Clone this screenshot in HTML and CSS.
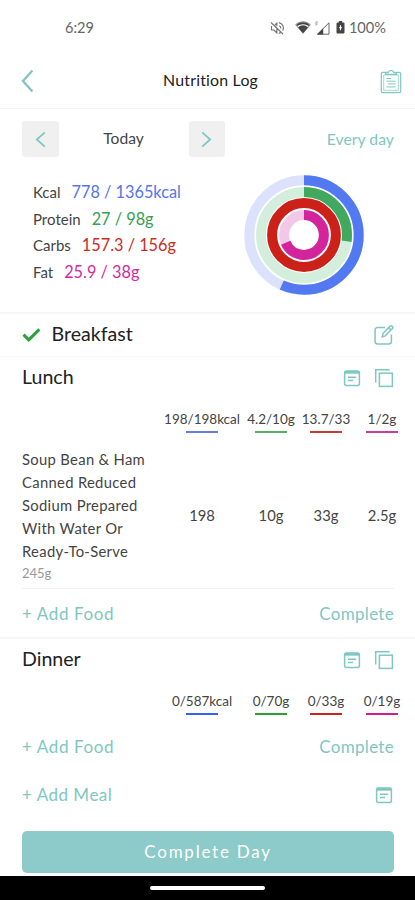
FILE: index.html
```html
<!DOCTYPE html>
<html lang="en">
<head>
<meta charset="utf-8">
<title>Nutrition Log</title>
<link rel="stylesheet" href="styles.css">
</head>
<body>
<svg class="defs" aria-hidden="true">
  <symbol id="note" viewBox="0 0 18 18"><rect x="1.6" y="1.9" width="14.8" height="14.6" rx="2"/><path d="M1.6 3.3h14.8" stroke-width="2.8"/><path d="M5 8.2h8.2M5 11.5h5"/></symbol>
  <symbol id="copy" viewBox="0 0 20 20"><path d="M1.7 14.5V1.7h14"/><rect x="5.4" y="5.2" width="13" height="13.2"/></symbol>
  <symbol id="edit" viewBox="0 0 20 20"><path d="M11 2.6H3.6a2.5 2.5 0 0 0-2.5 2.5v11.3a2.5 2.5 0 0 0 2.5 2.5h11.3a2.5 2.5 0 0 0 2.5-2.5V9.5"/><path d="M8.2 11.9l.7-3.4 7-7.1a1.5 1.5 0 0 1 2.4 2.4l-7.1 7.1zM14.8 2.8l2.3 2.3"/></symbol>
</svg>
<div class="screen">
  <div class="status">
    <span class="time">6:29</span>
    <div class="status-icons">
      <svg class="mute" viewBox="0 0 15 14"><path d="M1 1.5l12 11.5M1.5 5v4h2.3l3 2.8V8M5 4l1.8-1.8v3M9 1.6a5.5 5.5 0 0 1 3.8 8M9.2 4.7a2.5 2.5 0 0 1 1.5 2.8M8.8 12.4l1.8-.8"/></svg>
      <svg class="wifi" viewBox="0 0 16 13"><path d="M.7 3.7a10.5 10.5 0 0 1 14.6 0L8 12.3z" fill="none" stroke="#777" stroke-width=".9"/><path d="M3 6.2a7.4 7.4 0 0 1 10 0l-5 6z"/><path d="M1.4 3.8a10 10 0 0 1 13.2 0l-1 1.3a9 9 0 0 0-11.2 0z"/></svg>
      <svg class="signal" viewBox="0 0 15 14"><path d="M2.5 13.2L14 1.8v11.4z" fill="none" stroke="#666"/><path d="M2 13.5l6.2-6.2v6.2z"/><path d="M.6 1h2.6M.6 3h2.2M1 1v3.8" fill="none" stroke="#999" stroke-width=".8"/></svg>
      <svg class="battery" viewBox="0 0 9 13"><path d="M2.8 0h3.4v1.4h1.3q1 0 1 1v9q0 1-1 1h-6q-1 0-1-1v-9q0-1 1-1h1.3z"/><path d="M4.5 4.2v5M3 6.7h3" stroke="#fff" stroke-width="1.1"/></svg>
      <span class="charge">100%</span>
    </div>
  </div>

  <header class="header">
    <svg class="back" viewBox="0 0 13 24"><path d="M11.4 1.6L2 12l9.4 10.4"/></svg>
    <h1>Nutrition Log</h1>
    <svg class="clipboard" viewBox="0 0 22 26"><rect x="1.3" y="4.3" width="19.4" height="20.4" rx="1.5"/><rect x="3.8" y="7" width="14.4" height="15.2" stroke-width=".7"/><path d="M5.5 6.3V4.6h2.7a2.9 2.9 0 0 1 5.6 0h2.7v1.7z" fill="#fff"/><path d="M6.5 10.5h4.5M6.5 13.2h9M7.8 15.9h7.7M6.5 18.9h9" stroke-width="1"/></svg>
  </header>

  <section class="summary">
    <div class="dates">
      <button class="step"><svg viewBox="0 0 11 17"><path d="M9.8 1.3L1.8 8.5l8 7.2"/></svg></button>
      <span class="today">Today</span>
      <button class="step"><svg viewBox="0 0 11 17"><path d="M1.2 1.3l8 7.2-8 7.2"/></svg></button>
      <a class="every">Every day</a>
    </div>
    <div class="totals">
      <div class="legend">
        <div>Kcal<b class="t-kcal">778 / 1365kcal</b></div>
        <div>Protein<b class="t-protein">27 / 98g</b></div>
        <div>Carbs<b class="t-carbs">157.3 / 156g</b></div>
        <div>Fat<b class="t-fat">25.9 / 38g</b></div>
      </div>
      <svg class="rings" viewBox="-60 -60 120 120">
        <g transform="rotate(-90)">
          <circle r="54.7" stroke="#dce2fb"/><circle r="54.7" stroke="#5279f2" pathLength="360" stroke-dasharray="204 360"/>
          <circle r="43" stroke="#d4eedd"/><circle r="43" stroke="#41a860" pathLength="360" stroke-dasharray="98.5 360"/>
          <circle r="31.9" stroke="#cb2118"/>
          <circle r="19.9" stroke="#f3c8e6"/><circle r="19.9" stroke="#d4249b" pathLength="360" stroke-dasharray="247 360"/>
        </g>
      </svg>
    </div>
  </section>

  <section class="meal done">
    <div class="meal-head">
      <svg class="check" viewBox="0 0 19 14"><path d="M1.5 6.6l5.3 5.2L17.3 1.4"/></svg>
      <h2>Breakfast</h2>
      <svg class="icon i20"><use href="#edit"/></svg>
    </div>
  </section>

  <section class="meal">
    <div class="meal-head">
      <h2>Lunch</h2>
      <svg class="icon i18"><use href="#note"/></svg>
      <svg class="icon i20"><use href="#copy"/></svg>
    </div>
    <div class="grid macros soft">
      <span class="kcal">198/198kcal</span><span class="protein">4.2/10g</span><span class="carbs">13.7/33</span><span class="fat">1/2g</span>
    </div>
    <div class="grid food">
      <div class="name">Soup Bean &amp; Ham<br>Canned Reduced<br>Sodium Prepared<br>With Water Or<br>Ready-To-Serve<small>245g</small></div>
      <span>198</span><span>10g</span><span>33g</span><span>2.5g</span>
    </div>
    <div class="actions ruled"><a>+ Add Food</a><a class="finish">Complete</a></div>
  </section>

  <section class="meal last">
    <div class="meal-head">
      <h2>Dinner</h2>
      <svg class="icon i18"><use href="#note"/></svg>
      <svg class="icon i20"><use href="#copy"/></svg>
    </div>
    <div class="grid macros">
      <span class="kcal">0/587kcal</span><span class="protein">0/70g</span><span class="carbs">0/33g</span><span class="fat">0/19g</span>
    </div>
    <div class="actions spaced"><a>+ Add Food</a><a class="finish">Complete</a></div>
  </section>

  <div class="actions add-meal"><a>+ Add Meal</a><svg class="icon i18"><use href="#note"/></svg></div>
  <button class="complete">Complete Day</button>
  <div class="navbar"><i></i></div>
</div>
</body>
</html>
```
FILE: styles.css
```css
:root { --teal: #7fc7c1; }
* { box-sizing: border-box; }
body { margin: 0; background: #fff; color: #444; font-family: Lato, "Open Sans", sans-serif; font-variant-ligatures: none; }
h1, h2 { margin: 0; font-weight: 400; }
button { border: 0; padding: 0; font-family: inherit; }
svg { fill: none; flex: none; display: block; }
.defs { position: absolute; width: 0; height: 0; }
.screen { width: 415px; height: 900px; display: flex; flex-direction: column; overflow: hidden; }
.screen > * { flex: none; }

.status { height: 55px; padding: 0 29px 0 65px; display: flex; justify-content: space-between; align-items: center; font-size: 14.6px; color: #666; }
.status-icons { display: flex; align-items: center; }
.status-icons svg { fill: #444; }
.status-icons .mute { width: 15px; height: 14px; fill: none; stroke: #777; stroke-width: 1.2; margin-right: 10px; }
.wifi { width: 16px; height: 13px; margin-right: 4px; }
.signal { width: 15px; height: 14px; margin-right: 6px; }
.battery { width: 9px; height: 13px; margin-right: 4px; }

.header { height: 54px; padding: 0 13px 1px 21px; display: flex; align-items: center; border-bottom: 1px solid #f4f4f4; }
.header h1 { margin: 0 auto 0 130px; font-size: 15.9px; line-height: 20px; padding-bottom: 2px; letter-spacing: .2px; color: #222; }
.header svg { stroke: var(--teal); }
.back { width: 13px; height: 24px; stroke-width: 2.3; margin-right: -1px; }
.clipboard { width: 22px; height: 26px; stroke-width: 1.2; }

.summary { height: 205px; padding: 12px 21px 0 22px; border-bottom: 2px solid #f7f7f7; }
.dates { height: 36px; display: flex; align-items: center; }
.step { width: 36.5px; height: 36px; border-radius: 3px; background: #f0f0f0; display: flex; align-items: center; justify-content: center; }
.step svg { width: 11px; height: 17px; stroke: var(--teal); stroke-width: 1.8; }
.today { width: 130px; text-align: center; font-size: 15.6px; padding-bottom: 2px; }
.every { margin-left: auto; font-size: 15.8px; padding-bottom: 2px; color: var(--teal); }
.totals { display: flex; justify-content: space-between; padding: 18px 30px 0 11px; }
.legend { display: grid; grid-auto-rows: 26.6px; align-content: start; padding-top: 4px; font-size: 15px; line-height: 26.6px; }
.legend div { display: flex; align-items: baseline; gap: 11px; white-space: nowrap; }
.legend b { font-weight: 400; font-size: 16.3px; }
.t-kcal { color: #5575ee; }
.t-protein { color: #35a052; }
.t-carbs { color: #cd2b26; }
.t-fat { color: #cf2aa0; }
.rings { width: 120px; height: 120px; }
.rings circle { stroke-width: 10; }

.icon { stroke: var(--teal); stroke-width: 1.5; }
.i18 { width: 18px; height: 18px; }
.i20 { width: 20px; height: 20px; }
.meal { border-bottom: 2px solid #f6f6f6; }
.meal.done { border-bottom-width: 1px; }
.meal.last { border-bottom: 0; }
.meal-head { height: 43px; padding: 0 21px 1px 22px; display: flex; align-items: center; gap: 13px; }
.done .meal-head { height: 42px; gap: 10.5px; }
.meal-head h2 { flex: 1; font-size: 19.6px; line-height: 24px; padding-bottom: 2px; color: #222; }
.check { width: 19px; height: 14px; stroke: #2f9e3d; stroke-width: 3; }

.grid { display: grid; padding-left: 22px; align-items: center; text-align: center; }
.macros { grid-template-columns: 74px 64px 46px 66px; padding: 8px 0 0 165px; font-size: 13.5px; line-height: 22.5px; white-space: nowrap; }
.macros span { display: flex; flex-direction: column; align-items: center; }
.macros span::after { content: ""; width: 32px; height: 2.5px; background: var(--bar); }
.kcal { --bar: #3562ec; }
.protein { --bar: #2ba02f; }
.carbs { --bar: #cb2420; }
.fat { --bar: #d41c97; }
.soft .kcal { --bar: #667fdf; }
.soft .protein { --bar: #55ad68; }
.soft .carbs { --bar: #ca3a35; }
.soft .fat { --bar: #cf3a9e; }
.food { grid-template-columns: 143px 74px 64px 46px 66px; margin-top: 14.5px; font-size: 14.8px; }
.name { text-align: left; line-height: 23px; letter-spacing: .32px; }
.name small { display: block; font-size: 13px; line-height: 20px; letter-spacing: 0; color: #999; }
.actions { height: 48px; margin: 0 21px 0 22px; display: flex; align-items: center; justify-content: space-between; font-size: 17px; letter-spacing: .6px; color: var(--teal); }
.finish { letter-spacing: .3px; }
.actions.ruled { height: 49px; margin-top: 5.5px; border-top: 1px solid #f2f2f2; }
.actions.spaced { margin-top: 7.5px; }
.add-meal .icon { margin: 1px 1.5px 0 0; }
.add-meal { letter-spacing: .5px; }
.complete { margin: 12px 21px 0 22px; height: 42px; border-radius: 5px; background: #8ccbc9; color: #fff; font-size: 17px; letter-spacing: 1.75px; }
.navbar { margin-top: auto; height: 24.5px; background: #000; display: flex; justify-content: center; align-items: center; }
.navbar i { width: 115px; height: 4.5px; border-radius: 3px; background: #fff; }
```
